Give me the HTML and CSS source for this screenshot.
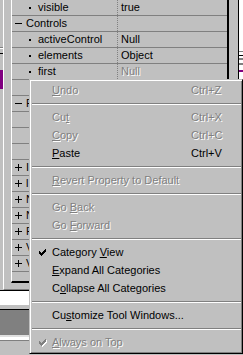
FILE: index.html
```html
<!DOCTYPE html>
<html lang="en">
<head>
  <meta charset="UTF-8">
  <title>Property Inspector</title>
  <link rel="stylesheet" href="styles.css">
</head>
<body>
  <div class="desk">
    <div class="frame">
      <div class="side"></div>
      <div class="panel">
        <div class="grid">
          <div class="row"><div class="name"><span class="dot"></span>visible</div><div class="val">true</div></div>
          <div class="row"><div class="name"><svg class="sign" width="7" height="7" viewBox="0 0 7 7"><path d="M0 3h7v1H0z"/></svg>Controls</div><div class="val"></div></div>
          <div class="row"><div class="name"><span class="dot"></span>activeControl</div><div class="val">Null</div></div>
          <div class="row"><div class="name"><span class="dot"></span>elements</div><div class="val">Object</div></div>
          <div class="row"><div class="name"><span class="dot"></span>first</div><div class="val dim">Null</div></div>
          <!-- rows below sit under the open menu -->
          <div class="row"><div class="name"><span class="dot"></span></div><div class="val"></div></div>
          <div class="row"><div class="name"><svg class="sign" width="7" height="7" viewBox="0 0 7 7"><path d="M0 3h7v1H0z"/></svg>F</div><div class="val"></div></div>
          <div class="row"><div class="name"><span class="dot"></span></div><div class="val"></div></div>
          <div class="row"><div class="name"><span class="dot"></span></div><div class="val"></div></div>
          <div class="row"><div class="name"><span class="dot"></span></div><div class="val"></div></div>
          <div class="row"><div class="name"><svg class="sign" width="7" height="7" viewBox="0 0 7 7"><path d="M0 3h7v1H0zM3 0h1v7H3z"/></svg>I</div><div class="val"></div></div>
          <div class="row"><div class="name"><svg class="sign" width="7" height="7" viewBox="0 0 7 7"><path d="M0 3h7v1H0zM3 0h1v7H3z"/></svg>l</div><div class="val"></div></div>
          <div class="row"><div class="name"><svg class="sign" width="7" height="7" viewBox="0 0 7 7"><path d="M0 3h7v1H0zM3 0h1v7H3z"/></svg>N</div><div class="val"></div></div>
          <div class="row"><div class="name"><svg class="sign" width="7" height="7" viewBox="0 0 7 7"><path d="M0 3h7v1H0zM3 0h1v7H3z"/></svg>N</div><div class="val"></div></div>
          <div class="row"><div class="name"><svg class="sign" width="7" height="7" viewBox="0 0 7 7"><path d="M0 3h7v1H0zM3 0h1v7H3z"/></svg>F</div><div class="val"></div></div>
          <div class="row"><div class="name"><svg class="sign" width="7" height="7" viewBox="0 0 7 7"><path d="M0 3h7v1H0zM3 0h1v7H3z"/></svg>V</div><div class="val"></div></div>
          <div class="row"><div class="name"><svg class="sign" width="7" height="7" viewBox="0 0 7 7"><path d="M0 3h7v1H0zM3 0h1v7H3z"/></svg>V</div><div class="val"></div></div>
          <div class="row"><div class="name"></div><div class="val"></div></div>
        </div>
      </div>
    </div>
    <div class="side-right"></div>
  </div>

  <div class="below">
    <div class="band-white"></div>
    <div class="band-bar"></div>
    <div class="band-light"></div>
  </div>

  <div class="menu">
    <div class="item off"><span class="mark"></span><span><u>U</u>ndo</span><span>Ctrl+Z</span></div>
    <div class="sep"></div>
    <div class="item off"><span class="mark"></span><span>Cu<u>t</u></span><span>Ctrl+X</span></div>
    <div class="item off"><span class="mark"></span><span><u>C</u>opy</span><span>Ctrl+C</span></div>
    <div class="item"><span class="mark"></span><span><u>P</u>aste</span><span>Ctrl+V</span></div>
    <div class="sep"></div>
    <div class="item off"><span class="mark"></span><span><u>R</u>evert Property to Default</span><span></span></div>
    <div class="sep"></div>
    <div class="item off"><span class="mark"></span><span>Go <u>B</u>ack</span><span></span></div>
    <div class="item off"><span class="mark"></span><span>Go <u>F</u>orward</span><span></span></div>
    <div class="sep"></div>
    <div class="item"><span class="mark"><svg class="tick" width="7" height="7" viewBox="0 0 7 7"><path d="M6 0h1v1H6zM5 1h2v1H5zM0 2h1v1H0zM4 2h3v1H4zM0 3h2v1H0zM3 3h3v1H3zM0 4h5v1H0zM1 5h3v1H1zM2 6h1v1H2z"/></svg></span><span>Category <u>V</u>iew</span><span></span></div>
    <div class="item"><span class="mark"></span><span><u>E</u>xpand All Categories</span><span></span></div>
    <div class="item"><span class="mark"></span><span>C<u>o</u>llapse All Categories</span><span></span></div>
    <div class="sep"></div>
    <div class="item"><span class="mark"></span><span>Cu<u>s</u>tomize Tool Windows...</span><span></span></div>
    <div class="sep"></div>
    <div class="item off"><span class="mark"><svg class="tick" width="7" height="7" viewBox="0 0 7 7"><path d="M6 0h1v1H6zM5 1h2v1H5zM0 2h1v1H0zM4 2h3v1H4zM0 3h2v1H0zM3 3h3v1H3zM0 4h5v1H0zM1 5h3v1H1zM2 6h1v1H2z"/></svg></span><span><u>A</u>lways on Top</span><span></span></div>
  </div>
</body>
</html>
```

FILE: styles.css
```css
* {
  box-sizing: border-box;
}

body {
  margin: 0;
  width: 243px;
  height: 355px;
  overflow: hidden;
  position: relative;
  background: #c0c0c0;
  font-family: "Liberation Sans", Arial, sans-serif;
  font-size: 11px;
  color: #000;
}

.desk {
  display: flex;
  height: 291px;
}

.frame {
  display: flex;
  width: 239px;
  border-right: 1px solid #000;
  border-bottom: 1px solid #000;
}

.side {
  width: 3px;
  background: linear-gradient(to bottom,
    #c0c0c0 0 47px, #808080 47px 48px, #fff 48px 49px, #c0c0c0 49px 53px,
    #000 53px 54px, #c0c0c0 54px 70px, #800080 70px 89px, #c0c0c0 89px);
}

.panel {
  flex: 1;
  border-left: 1px solid #fff;
  border-bottom: 1px solid #808080;
  padding: 0 9px 6px 7px;
}

.side-right {
  width: 4px;
  height: 79px;
  background: linear-gradient(to bottom,
    #fff 0 51px, #808080 51px 52px, #fff 52px 55px, #000 55px 56px,
    #fff 56px 58px, #808080 58px 60px, #fff 60px 63px, #808080 63px 65px,
    #fff 65px 70px, #800080 70px 72px, #fff 72px);
}

/* property grid */
.grid {
  height: 283px;
  overflow: hidden;
  border-left: 1px solid #fff;
  border-right: 2px solid #000;
  border-bottom: 2px solid #000;
}

.row {
  display: flex;
  height: 16px;
  line-height: 15px;
  border-bottom: 1px solid #808080;
}

.name {
  width: 105px;
  display: flex;
  align-items: center;
  white-space: nowrap;
  overflow: hidden;
}

.val {
  flex: 1;
  border-left: 1px dotted #808080;
  padding-left: 3px;
}

.dim {
  color: #808080;
  text-shadow: 1px 1px 0 #fff;
}

.dot {
  width: 2px;
  height: 2px;
  background: #000;
  margin: 0 7px 0 17px;
}

.sign {
  margin: 0 4px 0 3px;
  fill: #000;
}

/* strip under the window */
.below {
  height: 64px;
}

.band-white {
  height: 15px;
  background: #fff;
  border-bottom: 1px solid #c0c0c0;
}

.band-bar {
  height: 28px;
  margin-top: 3px;
  background: #808080;
  border-top: 1px solid #000;
  border-bottom: 2px solid #dfdfdf;
}

.band-light {
  height: 4px;
  background: #fff;
  border-bottom: 1px solid #808080;
}

/* context menu */
.menu {
  position: absolute;
  left: 29px;
  top: 79px;
  width: 214px;
  height: 275px;
  padding: 1px 1px 2px 1px;
  background: #c0c0c0;
  border: 1px solid;
  border-color: #c0c0c0 #000 #000 #c0c0c0;
  box-shadow: inset 1px 1px #fff, inset -1px -1px #808080;
}

.item {
  display: grid;
  grid-template-columns: 21px 1fr 50px;
  height: 18px;
  line-height: 18px;
  white-space: nowrap;
}

.mark {
  position: relative;
}

.tick {
  position: absolute;
  left: 8px;
  top: 6px;
  fill: #000;
  shape-rendering: crispEdges;
}

.off {
  color: #808080;
  text-shadow: 1px 1px 0 #fff;
}

.off .tick {
  fill: #808080;
  filter: drop-shadow(1px 1px 0 #fff);
}

.sep {
  height: 2px;
  margin: 4px 0 3px 1px;
  border-top: 1px solid #808080;
  border-bottom: 1px solid #fff;
}
```
